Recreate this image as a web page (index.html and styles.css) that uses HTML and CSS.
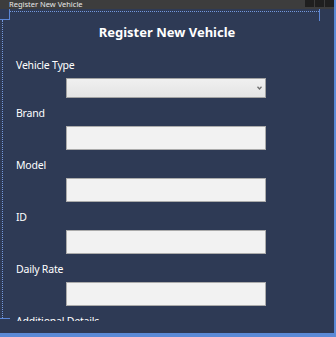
FILE: index.html
```html
<!DOCTYPE html>
<html>
<head>
<meta charset="utf-8">
<link rel="stylesheet" href="styles.css">
</head>
<body>
<div class="frame">
  <div class="titlebar">
    <span class="title-text">Register New Vehicle</span>
    <div class="tb-buttons"><span class="tb-btn"></span><span class="tb-btn"></span><span class="tb-btn"></span></div>
  </div>
  <div class="client">
    <div class="adorn-top"></div>
    <div class="adorn-top-tick"></div>
    <div class="adorn-corner-v"></div>
    <div class="adorn-corner-h"></div>
    <div class="adorn-left"></div>
    <div class="adorn-bottom-h"></div>
    <div class="content">
      <h1 class="heading">Register New Vehicle</h1>
      <div class="field field-first">
        <label class="label">Vehicle Type</label>
        <div class="combo"><svg class="chev" width="5" height="4" viewBox="0 0 5 4"><path d="M0.5 0.8 L2.5 3 L4.5 0.8" fill="none" stroke="#707070" stroke-width="1.3"/></svg></div>
      </div>
      <div class="field">
        <label class="label">Brand</label>
        <div class="textbox"></div>
      </div>
      <div class="field">
        <label class="label">Model</label>
        <div class="textbox"></div>
      </div>
      <div class="field">
        <label class="label">ID</label>
        <div class="textbox"></div>
      </div>
      <div class="field">
        <label class="label">Daily Rate</label>
        <div class="textbox"></div>
      </div>
      <div class="field">
        <label class="label">Additional Details</label>
      </div>
    </div>
  </div>
  <div class="bottom-band"></div>
</div>
</body>
</html>
```

FILE: styles.css
```css
html, body {
  margin: 0;
  padding: 0;
  width: 336px;
  height: 337px;
  overflow: hidden;
  background: #2e3a55;
}
.frame {
  width: 336px;
  height: 337px;
  display: flex;
  flex-direction: column;
  box-sizing: border-box;
  border-right: 2px solid #5b8ad6;
}
.titlebar {
  height: 9px;
  flex: none;
  background: #3d3d3d;
  display: flex;
  align-items: center;
  justify-content: space-between;
  padding-left: 9px;
  overflow: hidden;
}
.title-text {
  font-family: "Noto Sans", sans-serif;
  font-size: 7.5px;
  line-height: 9px;
  color: #e8e8e8;
  margin-top: -1px;
}
.tb-buttons {
  display: flex;
  gap: 1px;
  align-self: flex-start;
}
.tb-btn {
  width: 9px;
  height: 7px;
  background: #1f1f1f;
}
.client {
  flex: 1;
  position: relative;
  overflow: hidden;
}
.adorn-top {
  position: absolute;
  left: 10px;
  top: 2px;
  width: 309px;
  border-top: 1px dotted #7498dc;
}
.adorn-top-tick {
  position: absolute;
  left: 319px;
  top: 0;
  width: 1px;
  height: 12px;
  background: #5b86d6;
}
.adorn-corner-v {
  position: absolute;
  left: 9px;
  top: 0;
  width: 1px;
  height: 10px;
  background: #5b86d6;
}
.adorn-corner-h {
  position: absolute;
  left: 0;
  top: 10px;
  width: 10px;
  height: 1px;
  background: #5b86d6;
}
.adorn-left {
  position: absolute;
  left: 2px;
  top: 11px;
  height: 298px;
  border-left: 1px dotted #7498dc;
}
.adorn-bottom-h {
  position: absolute;
  left: 0;
  top: 309px;
  width: 10px;
  height: 1px;
  background: #5b86d6;
}
.content {
  height: 312px;
  overflow: hidden;
  padding: 0 0 0 16px;
  font-family: "Noto Sans", sans-serif;
  color: #ffffff;
}
.heading {
  margin: 14px 0 0 0;
  padding-right: 16px;
  text-align: center;
  font-size: 13px;
  font-weight: 700;
  line-height: 18px;
  height: 18px;
}
.field {
  display: flex;
  flex-direction: column;
}
.label {
  font-size: 10.5px;
  letter-spacing: -0.2px;
  line-height: 14px;
  margin-top: 8px;
}
.field-first .label {
  margin-top: 17px;
}
.combo {
  margin: 6px 0 0 50px;
  width: 200px;
  height: 20px;
  box-sizing: border-box;
  border: 1px solid #a2a2a2;
  background: linear-gradient(#f0f0f0, #e4e4e4);
  display: flex;
  align-items: center;
  justify-content: flex-end;
  padding-right: 3px;
}
.textbox {
  margin: 6px 0 0 50px;
  width: 200px;
  height: 24px;
  box-sizing: border-box;
  border: 1px solid #ababab;
  background: #f2f2f2;
}
.bottom-band {
  flex: none;
  height: 4px;
  background: #5b8ad6;
}
```
